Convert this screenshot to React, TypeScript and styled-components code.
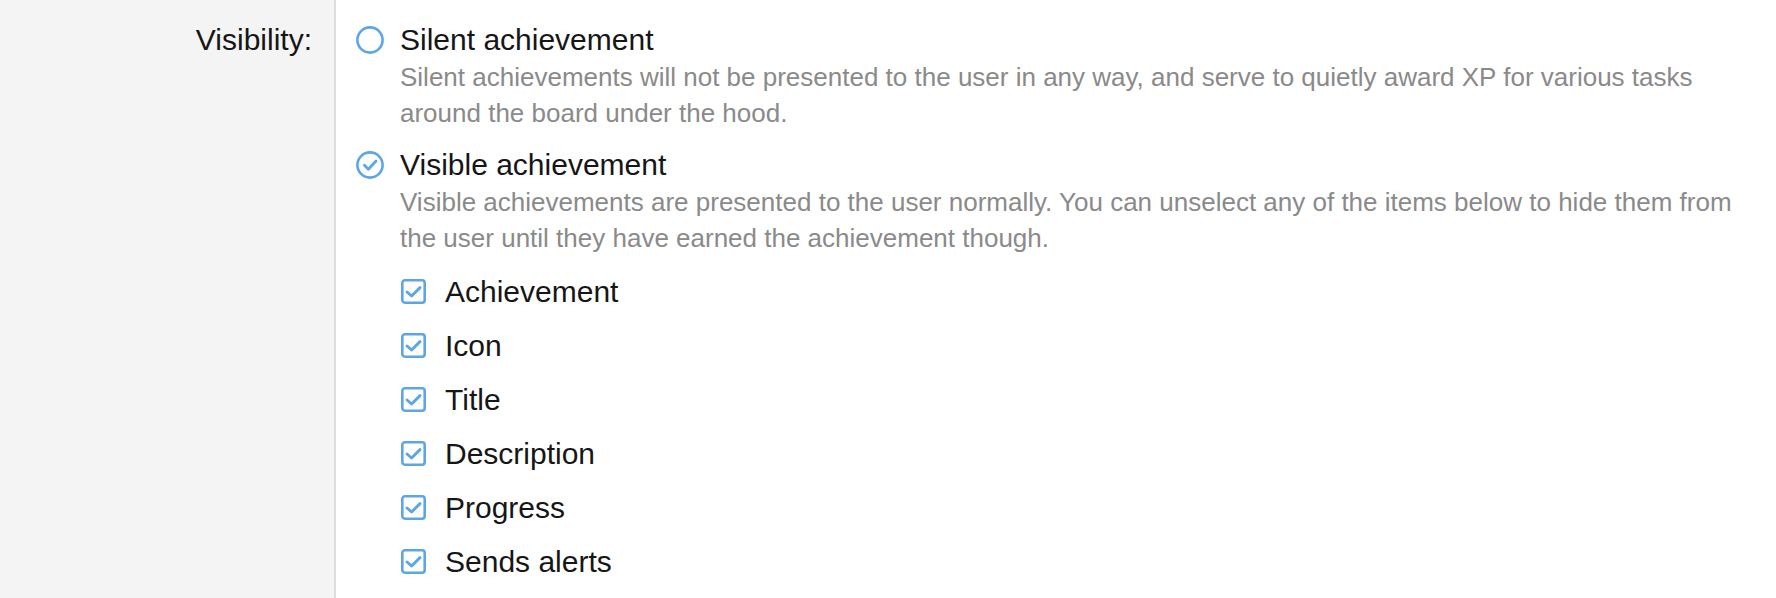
import React from 'react'
import styled, { createGlobalStyle } from 'styled-components'

const Blue = '#5ca6e8'

const GlobalStyle = createGlobalStyle`
  html, body {
    margin: 0;
    padding: 0;
    background: #ffffff;
  }
  body {
    font-family: "Liberation Sans", Helvetica, Arial, sans-serif;
    color: #161616;
  }
`

const RadioIcon = ({ checked }: { checked?: boolean }) => (
  <svg width="28" height="28" viewBox="0 0 28 28" fill="none">
    <circle cx="14" cy="14" r="12.6" stroke={Blue} strokeWidth="2.6" />
    {checked && (
      <path
        d="M8.4 14.2 L12.4 18.2 L20 10"
        stroke={Blue}
        strokeWidth="2.8"
        strokeLinecap="round"
        strokeLinejoin="round"
      />
    )}
  </svg>
)

const CheckIcon = () => (
  <svg width="25" height="25" viewBox="0 0 25 25" fill="none">
    <rect x="1.3" y="1.3" width="22.4" height="22.4" rx="2.6" stroke={Blue} strokeWidth="2.6" />
    <path
      d="M6 13 L10.6 17 L19 8.6"
      stroke={Blue}
      strokeWidth="2.9"
      strokeLinecap="round"
      strokeLinejoin="round"
    />
  </svg>
)

const visibleParts = ['Achievement', 'Icon', 'Title', 'Description', 'Progress', 'Sends alerts']

export default function App() {
  return (
    <>
      <GlobalStyle />
      <FormRow>
        <LabelCell>Visibility:</LabelCell>
        <FieldCell>
          <OptionList>
            <Option>
              <OptionHead>
                <RadioIcon />
                <OptionTitle>Silent achievement</OptionTitle>
              </OptionHead>
              <Description>
                Silent achievements will not be presented to the user in any way, and serve to quietly award XP for
                various tasks around the board under the hood.
              </Description>
            </Option>
            <Option>
              <OptionHead>
                <RadioIcon checked />
                <OptionTitle>Visible achievement</OptionTitle>
              </OptionHead>
              <Description>
                Visible achievements are presented to the user normally. You can unselect any of the items below to
                hide them from the user until they have earned the achievement though.
              </Description>
              <CheckList>
                {visibleParts.map((part) => (
                  <CheckRow key={part}>
                    <CheckIcon />
                    <CheckLabel>{part}</CheckLabel>
                  </CheckRow>
                ))}
              </CheckList>
            </Option>
          </OptionList>
        </FieldCell>
      </FormRow>
    </>
  )
}

const FormRow = styled.div`
  display: grid;
  grid-template-columns: 336px 1fr;
  min-height: 100vh;
`

const LabelCell = styled.div`
  box-sizing: border-box;
  background: #f4f4f4;
  border-right: 2px solid #dcdcdc;
  padding: 22px 22px 0 0;
  text-align: right;
  font-size: 30px;
  line-height: 36px;
  color: #161616;
`

const FieldCell = styled.div`
  padding: 22px 16px 0 20px;
`

const OptionList = styled.div`
  display: flex;
  flex-direction: column;
  gap: 16px;
`

const Option = styled.div`
  display: flex;
  flex-direction: column;
`

const OptionHead = styled.label`
  display: flex;
  align-items: center;
  gap: 16px;
  cursor: pointer;

  svg {
    flex: none;
    margin-top: -1px;
  }
`

const OptionTitle = styled.span`
  font-size: 30px;
  line-height: 36px;
  color: #161616;
`

const Description = styled.div`
  margin: 1px 0 0 44px;
  font-size: 26px;
  line-height: 36px;
  color: #8a8a8a;
`

const CheckList = styled.div`
  display: flex;
  flex-direction: column;
  gap: 18px;
  margin: 18px 0 0 45px;
`

const CheckRow = styled.label`
  display: flex;
  align-items: center;
  gap: 19px;
  height: 36px;
  cursor: pointer;

  svg {
    flex: none;
    margin-top: -2px;
  }
`

const CheckLabel = styled.span`
  font-size: 30px;
  line-height: 36px;
  color: #161616;
`
